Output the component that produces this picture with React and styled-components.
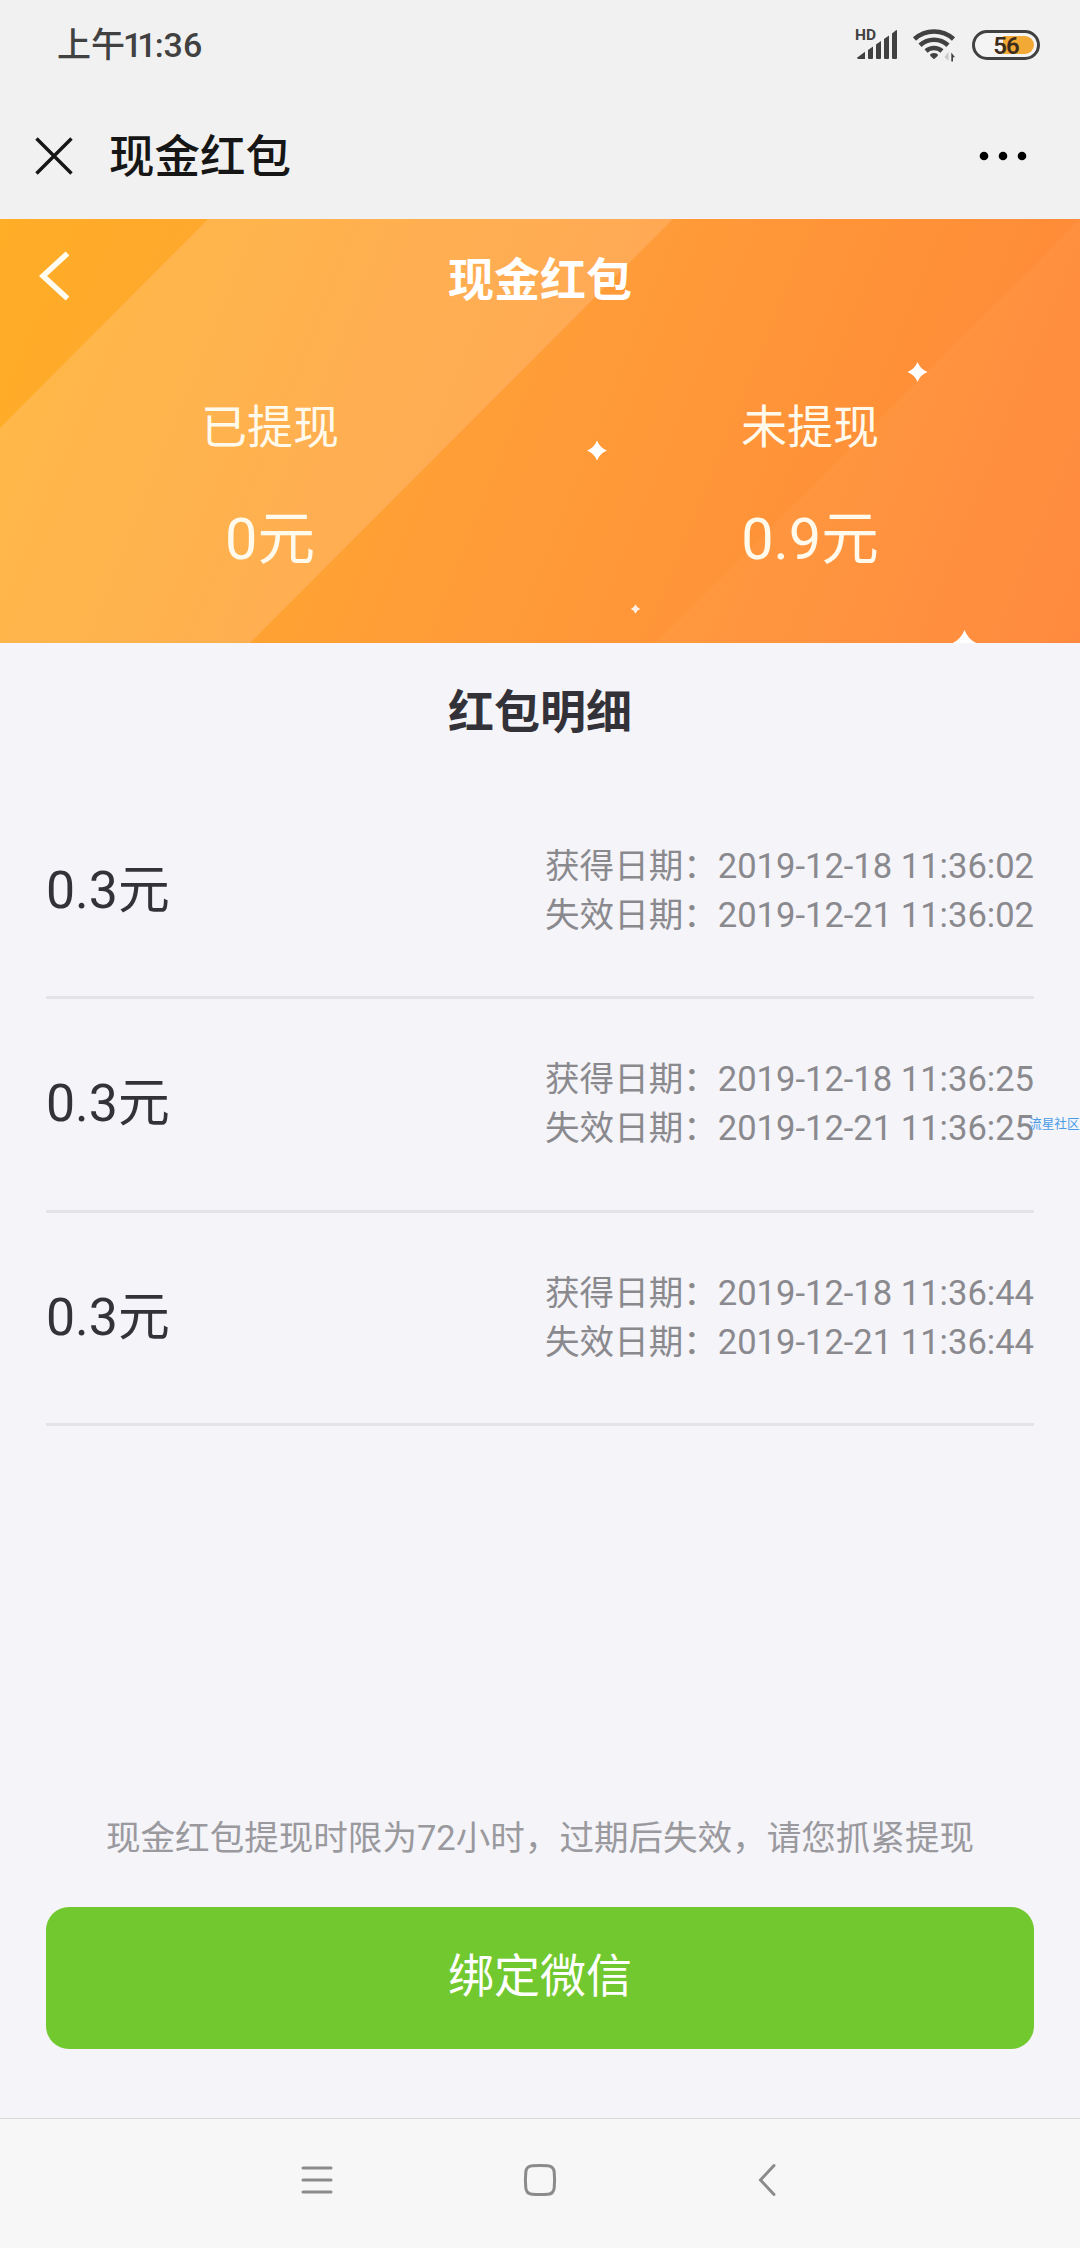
import { useState } from 'react';
import styled, { createGlobalStyle } from 'styled-components';

const records = [
  { id: 1, amount: '0.3', gained: '2019-12-18 11:36:02', expires: '2019-12-21 11:36:02' },
  { id: 2, amount: '0.3', gained: '2019-12-18 11:36:25', expires: '2019-12-21 11:36:25' },
  { id: 3, amount: '0.3', gained: '2019-12-18 11:36:44', expires: '2019-12-21 11:36:44' },
];

const SignalIcon = () => (
  <svg width="50" height="44" viewBox="850 22 50 44">
    <g fill="#414141">
      <path d="M860 58q-1.500-.5-.3-1.700l7.300-5.600v7.300z" />
      <path d="M870 49l5-3.600v11.600q0 1-1 1h-3q-1 0-1-1z" />
      <path d="M878 43.500l5-3.600v17.100q0 1-1 1h-3q-1 0-1-1z" />
      <path d="M886 38l5-3.600v22.600q0 1-1 1h-3q-1 0-1-1z" />
      <path d="M894 32.500l4-3.200q1-.6 1 .6v27.100q0 1-1 1h-3q-1 0-1-1z" />
    </g>
    <text x="857" y="38.700" fontSize="15.500" fontWeight="700" fontFamily="Roboto, sans-serif" fill="#414141">HD</text>
  </svg>
);

const WifiIcon = () => (
  <svg width="46" height="36" viewBox="914 27 46 36">
    <g fill="none" stroke="#414141" strokeWidth="4.600">
      <path d="M916.500 39a29 29 0 0 1 39 0" />
      <path d="M922 45.300a20.500 20.500 0 0 1 28 0" />
      <path d="M928 51a12.300 12.300 0 0 1 16 0" />
    </g>
    <path d="M936 59.300l-3.600-3.300q-1-1.300.5-2.300 3.100-1.500 6.200 0 1.500 1 .5 2.300z" fill="#414141" />
    <path d="M950.500 52v9l-4-4z" fill="#c9c9c9" />
    <path d="M953.300 61.500v-9l3.700 4.700h-2v4.300z" fill="#414141" />
  </svg>
);

const BatteryIcon = () => (
  <svg width="68" height="30" viewBox="0 0 68 30">
    <rect x="1.500" y="1.500" width="65" height="27" rx="13.500" fill="#f4f4f4" stroke="#414141" strokeWidth="3" />
    <path d="M31 6h22a9 9 0 0 1 0 18h-22z" fill="#f3a935" />
    <text x="34" y="23.800" textAnchor="middle" fontSize="24" fontWeight="600" letterSpacing="-1" fontFamily="Roboto, sans-serif" fill="#3d2c1c">56</text>
  </svg>
);

// four-pointed star, r is the distance from the centre to a tip
const Spark = ({ x, y, r, opacity = 1 }) => {
  const k = r * 0.28;
  return (
    <path
      fill="#fff"
      opacity={opacity}
      d={`M${x} ${y - r}Q${x + k} ${y - k} ${x + r} ${y}Q${x + k} ${y + k} ${x} ${y + r}Q${x - k} ${y + k} ${x - r} ${y}Q${x - k} ${y - k} ${x} ${y - r}Z`}
    />
  );
};

const App = () => {
  const [list] = useState(records);

  return (
    <Page>
      <GlobalStyle />
      <StatusBar>
        <Clock>上午<Narrow>11</Narrow>:36</Clock>
        <StatusIcons>
          <SignalIcon />
          <WifiIcon />
          <BatteryIcon />
        </StatusIcons>
      </StatusBar>

      <TitleBar>
        <svg width="38" height="38" viewBox="0 0 38 38">
          <path d="M1.500 1.500l35 35M36.500 1.500l-35 35" stroke="#161616" strokeWidth="3.400" fill="none" />
        </svg>
        <Title>现金红包</Title>
        <svg width="48" height="10" viewBox="0 0 48 10">
          <circle cx="5" cy="5" r="4.300" />
          <circle cx="24" cy="5" r="4.300" />
          <circle cx="43" cy="5" r="4.300" />
        </svg>
      </TitleBar>

      <Banner>
        <BannerArt width="1080" height="424" viewBox="0 0 1080 424">
          <path d="M208 0H673L250 424H0V209Z" fill="#fff" opacity=".15" />
          <path d="M1080 0V424H656Z" fill="#fff" opacity=".04" />
          <Spark x={917.5} y={153} r={10} />
          <Spark x={597} y={231.500} r={10} />
          <Spark x={635.500} y={390} r={4.800} opacity={0.85} />
          <Spark x={964.500} y={425} r={14} />
        </BannerArt>
        <BannerHead>
          <svg width="32" height="50" viewBox="0 0 32 50">
            <path d="M29.500 2.500L5 25l24.500 22.500" stroke="#fffdf2" strokeWidth="5.500" fill="none" />
          </svg>
          <BannerTitle>现金红包</BannerTitle>
        </BannerHead>
        <Stats>
          <Stat>
            <StatLabel>已提现</StatLabel>
            <StatValue>0元</StatValue>
          </Stat>
          <Stat>
            <StatLabel>未提现</StatLabel>
            <StatValue>0.9元</StatValue>
          </Stat>
        </Stats>
      </Banner>

      <Content>
        <SectionTitle>红包明细</SectionTitle>
        {list.map((item) => (
          <Record key={item.id}>
            <Amount>{item.amount}元</Amount>
            <Dates>
              <div>获得日期：{item.gained}</div>
              <div>失效日期：{item.expires}</div>
            </Dates>
          </Record>
        ))}
        <Footer>
          <Notice>现金红包提现时限为72小时，过期后失效，请您抓紧提现</Notice>
          <BindButton type="button">绑定微信</BindButton>
        </Footer>
      </Content>

      <NavBar>
        <svg width="32" height="34" viewBox="0 0 32 34">
          <path d="M2 5h28M2 17h28M2 29h28" stroke="#8b8b8b" strokeWidth="3" strokeLinecap="round" />
        </svg>
        <svg width="34" height="34" viewBox="0 0 34 34">
          <path d="M9 2.800Q17 2 25 2.800 30.500 3.200 31.200 9 32 17 31.200 25 30.500 30.800 25 31.200 17 32 9 31.200 3.500 30.800 2.800 25 2 17 2.800 9 3.500 3.200 9 2.800Z" stroke="#8b8b8b" strokeWidth="3" fill="none" />
        </svg>
        <svg width="20" height="34" viewBox="0 0 20 34">
          <path d="M17 2.500L3.500 17 17 31.500" stroke="#8b8b8b" strokeWidth="3" strokeLinecap="round" fill="none" />
        </svg>
      </NavBar>

      <Watermark>流星社区</Watermark>
    </Page>
  );
};

const GlobalStyle = createGlobalStyle`
  * {
    box-sizing: border-box;
  }

  body {
    margin: 0;
    font-family: Roboto, 'Noto Sans CJK SC', sans-serif;
  }

  svg {
    display: block;
    flex-shrink: 0;
  }
`;

const Page = styled.div`
  position: relative;
  display: flex;
  flex-direction: column;
  width: 1080px;
  height: 2248px;
  overflow: hidden;
  background-color: #f4f4f9;
`;

const StatusBar = styled.div`
  display: flex;
  align-items: center;
  justify-content: space-between;
  height: 89px;
  padding: 0 40px 0 57px;
  background-color: #f1f1f1;
`;

const Clock = styled.div`
  color: #414141;
  font-size: 34px;
  font-weight: 500;
  line-height: 40px;
`;

const Narrow = styled.span`
  letter-spacing: -5px;
  margin-left: -2px;
  margin-right: 3px;
`;

const StatusIcons = styled.div`
  display: flex;
  align-items: center;
  gap: 14px;
`;

const TitleBar = styled.div`
  display: flex;
  align-items: center;
  height: 130px;
  padding: 3px 53px 0 35px;
  background-color: #f1f1f1;
`;

const Title = styled.h1`
  flex: 1;
  margin: 0 0 0 36px;
  padding-top: 4px;
  color: #161616;
  font-size: 45.5px;
  font-weight: 500;
  line-height: 60px;
`;

const Banner = styled.header`
  position: relative;
  height: 424px;
  background: linear-gradient(112deg, #ffae27 0%, #ff9c38 50%, #ff8638 100%);
`;

const BannerArt = styled.svg`
  position: absolute;
  top: 0;
  left: 0;
`;

const BannerHead = styled.div`
  position: relative;
  display: grid;
  grid-template-columns: 100px 1fr 100px;
  align-items: center;
  height: 114px;
  padding: 0 38px;
`;

const BannerTitle = styled.h2`
  margin: 8px 0 0;
  color: #fff;
  font-size: 46px;
  font-weight: 700;
  line-height: 60px;
  text-align: center;
`;

const Stats = styled.div`
  position: relative;
  display: grid;
  grid-template-columns: 1fr 1fr;
  padding-top: 60px;
  color: #fffaec;
  text-align: center;
`;

const Stat = styled.div`
  display: flex;
  flex-direction: column;
  gap: 41px;
`;

const StatLabel = styled.div`
  font-size: 46px;
  line-height: 68px;
`;

const StatValue = styled.div`
  font-size: 57.6px;
  line-height: 76px;
`;

const Content = styled.main`
  flex: 1;
  display: flex;
  flex-direction: column;
  padding: 0 46px;
`;

const SectionTitle = styled.h2`
  height: 143px;
  margin: 0;
  color: #333238;
  font-size: 46px;
  font-weight: 700;
  line-height: 138px;
  text-align: center;
`;

const Record = styled.div`
  display: flex;
  align-items: center;
  justify-content: space-between;
  height: 213.3px;
  border-bottom: 3px solid #e4e3e8;
`;

const Amount = styled.div`
  color: #333238;
  font-size: 51.8px;
  line-height: 70px;
`;

const Dates = styled.div`
  color: #8a898e;
  font-size: 34.56px;
  line-height: 49px;
`;

const Footer = styled.div`
  margin-top: auto;
  padding-bottom: 69px;
`;

const Notice = styled.p`
  margin: 0 0 43px;
  color: #9a999e;
  font-size: 34.56px;
  line-height: 52px;
  text-align: center;
  white-space: nowrap;
`;

const BindButton = styled.button`
  display: block;
  width: 100%;
  height: 142px;
  padding: 0 0 12px;
  border: none;
  border-radius: 23px;
  background-color: #72c82f;
  color: #fff;
  font-family: inherit;
  font-size: 46px;
`;

const NavBar = styled.nav`
  display: grid;
  grid-template-columns: 223px 223px 231px;
  justify-items: center;
  align-items: center;
  height: 130px;
  padding: 0 0 7px 205px;
  border-top: 1px solid #d9d9d9;
  background-color: #f7f7f7;
`;

// stamped over the list, runs off the right edge
const Watermark = styled.div`
  position: absolute;
  top: 1114px;
  left: 1029px;
  color: #4a9ce8;
  font-size: 12.7px;
  line-height: 20px;
  white-space: nowrap;
`;

export default App;
